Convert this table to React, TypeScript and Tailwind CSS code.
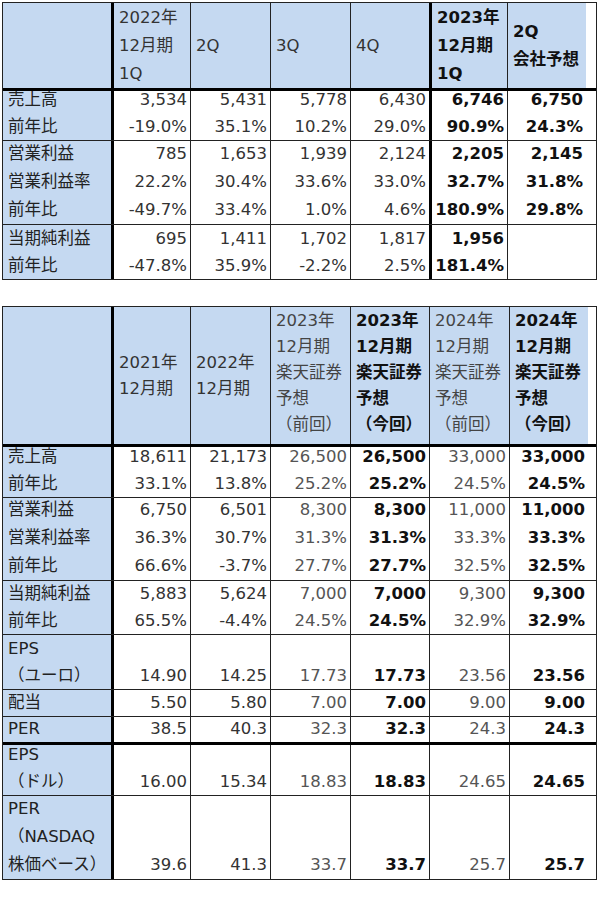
import React from "react";

type C = { l: string[]; b?: boolean; c?: string; v?: "top" | "mid" | "bot" };

const F = "font-['DejaVu_Sans','Noto_Sans_CJK_JP',sans-serif]";
const THIN = "border-l border-l-[#222]";
const THICK = "border-l-[3px] border-l-black";

const W1 = ["w-[108px]", "w-[79px]", "w-[80px]", "w-[80px]", "w-[79px]", "w-[78px]", "w-[79px]"];
const B1 = ["", THICK, THIN, THIN, THIN, THICK, THIN];
const W2 = ["w-[108px]", "w-[79px]", "w-[80px]", "w-[80px]", "w-[79px]", "w-[80px]", "w-[79px]"];
const B2 = ["", THICK, THIN, THIN, THIN, THIN, THIN];

type RowDef = {
  h: string;
  lead: string;
  top: "none" | "thin" | "thick";
  header?: boolean;
  cells: C[];
};

function Row({ r, W, B }: { r: RowDef; W: string[]; B: string[] }) {
  const topCls =
    r.top === "thick"
      ? "border-t-[3px] border-t-black"
      : r.top === "thin"
      ? "border-t border-t-[#222]"
      : "";
  return (
    <div className={`flex ${r.h} ${topCls}`}>
      {r.cells.map((cell, i) => {
        const isLabel = i === 0;
        const bg = isLabel || r.header ? "bg-[#c5d9f1]" : "bg-white";
        const v = cell.v ?? (r.header ? "mid" : "bot");
        const just = v === "top" ? "justify-start pt-[1px]" : v === "mid" ? "justify-center" : "justify-end";
        const align = isLabel || r.header ? "items-start pl-[5px]" : "items-end pr-[3px]";
        const weight = cell.b ? "font-bold" : "font-normal";
        const color = cell.c ?? (cell.b ? "text-[#111]" : "text-[#333]");
        return (
          <div
            key={i}
            className={`${W[i]} ${B[i]} ${bg} shrink-0 flex flex-col ${just} ${align} ${r.lead} ${weight} ${color} overflow-hidden whitespace-nowrap`}
          >
            {cell.l.map((t, j) => (
              <div key={j}>{t}</div>
            ))}
          </div>
        );
      })}
    </div>
  );
}

const G = "text-[#555]";

const t1: RowDef[] = [
  {
    h: "h-[85px]",
    lead: "leading-[28px]",
    top: "none",
    header: true,
    cells: [
      { l: [] },
      { l: ["2022年", "12月期", "1Q"] },
      { l: ["2Q"] },
      { l: ["3Q"] },
      { l: ["4Q"] },
      { l: ["2023年", "12月期", "1Q"], b: true },
      { l: ["2Q", "会社予想"], b: true },
    ],
  },
  {
    h: "h-[52px]",
    lead: "leading-[27px]",
    top: "thick",
    cells: [
      { l: ["売上高", "前年比"], c: "text-[#222]" },
      { l: ["3,534", "-19.0%"] },
      { l: ["5,431", "35.1%"] },
      { l: ["5,778", "10.2%"] },
      { l: ["6,430", "29.0%"] },
      { l: ["6,746", "90.9%"], b: true },
      { l: ["6,750", "24.3%"], b: true },
    ],
  },
  {
    h: "h-[84px]",
    lead: "leading-[28px]",
    top: "thin",
    cells: [
      { l: ["営業利益", "営業利益率", "前年比"], c: "text-[#222]" },
      { l: ["785", "22.2%", "-49.7%"] },
      { l: ["1,653", "30.4%", "33.4%"] },
      { l: ["1,939", "33.6%", "1.0%"] },
      { l: ["2,124", "33.0%", "4.6%"] },
      { l: ["2,205", "32.7%", "180.9%"], b: true },
      { l: ["2,145", "31.8%", "29.8%"], b: true },
    ],
  },
  {
    h: "h-[55px]",
    lead: "leading-[27px]",
    top: "thin",
    cells: [
      { l: ["当期純利益", "前年比"], c: "text-[#222]" },
      { l: ["695", "-47.8%"] },
      { l: ["1,411", "35.9%"] },
      { l: ["1,702", "-2.2%"] },
      { l: ["1,817", "2.5%"] },
      { l: ["1,956", "181.4%"], b: true },
      { l: [] },
    ],
  },
];

function six(a: string[], b: string[], c: string[], d: string[]): C[] {
  return [
    { l: a },
    { l: b },
    { l: c, c: G },
    { l: c, b: true },
    { l: d, c: G },
    { l: d, b: true },
  ];
}

const t2: RowDef[] = [
  {
    h: "h-[137px]",
    lead: "leading-[26px]",
    top: "none",
    header: true,
    cells: [
      { l: [] },
      { l: ["2021年", "12月期"], v: "mid" },
      { l: ["2022年", "12月期"], v: "mid" },
      { l: ["2023年", "12月期", "楽天証券", "予想", "（前回）"], v: "top", c: "text-[#444]" },
      { l: ["2023年", "12月期", "楽天証券", "予想", "（今回）"], v: "top", b: true },
      { l: ["2024年", "12月期", "楽天証券", "予想", "（前回）"], v: "top", c: "text-[#444]" },
      { l: ["2024年", "12月期", "楽天証券", "予想", "（今回）"], v: "top", b: true },
    ],
  },
  {
    h: "h-[53px]",
    lead: "leading-[27px]",
    top: "thick",
    cells: [
      { l: ["売上高", "前年比"], c: "text-[#222]" },
      ...six(["18,611", "33.1%"], ["21,173", "13.8%"], ["26,500", "25.2%"], ["33,000", "24.5%"]),
    ],
  },
  {
    h: "h-[83px]",
    lead: "leading-[28px]",
    top: "thin",
    cells: [
      { l: ["営業利益", "営業利益率", "前年比"], c: "text-[#222]" },
      ...six(
        ["6,750", "36.3%", "66.6%"],
        ["6,501", "30.7%", "-3.7%"],
        ["8,300", "31.3%", "27.7%"],
        ["11,000", "33.3%", "32.5%"]
      ),
    ],
  },
  {
    h: "h-[54px]",
    lead: "leading-[27px]",
    top: "thin",
    cells: [
      { l: ["当期純利益", "前年比"], c: "text-[#222]" },
      ...six(["5,883", "65.5%"], ["5,624", "-4.4%"], ["7,000", "24.5%"], ["9,300", "32.9%"]),
    ],
  },
  {
    h: "h-[55px]",
    lead: "leading-[27px]",
    top: "thin",
    cells: [
      { l: ["EPS", "（ユーロ）"], c: "text-[#222]" },
      ...six(["14.90"], ["14.25"], ["17.73"], ["23.56"]),
    ],
  },
  {
    h: "h-[27px]",
    lead: "leading-[27px]",
    top: "thin",
    cells: [{ l: ["配当"], c: "text-[#222]" }, ...six(["5.50"], ["5.80"], ["7.00"], ["9.00"])],
  },
  {
    h: "h-[26px]",
    lead: "leading-[26px]",
    top: "thin",
    cells: [{ l: ["PER"], c: "text-[#222]" }, ...six(["38.5"], ["40.3"], ["32.3"], ["24.3"])],
  },
  {
    h: "h-[53px]",
    lead: "leading-[27px]",
    top: "thick",
    cells: [
      { l: ["EPS", "（ドル）"], c: "text-[#222]" },
      ...six(["16.00"], ["15.34"], ["18.83"], ["24.65"]),
    ],
  },
  {
    h: "h-[84px]",
    lead: "leading-[28px]",
    top: "thin",
    cells: [
      { l: ["PER", "（NASDAQ", "株価ベース）"], c: "text-[#222]" },
      ...six(["39.6"], ["41.3"], ["33.7"], ["25.7"]),
    ],
  },
];

export default function App() {
  return (
    <div className={`w-[600px] h-[898px] bg-white overflow-hidden pt-[2px] pl-[2px] text-[16.5px] ${F}`}>
      <div className="w-[595px] border border-[#222]">
        {t1.map((r, i) => (
          <Row key={i} r={r} W={W1} B={B1} />
        ))}
      </div>
      <div className="w-[595px] border border-[#222] mt-[26px]">
        {t2.map((r, i) => (
          <Row key={i} r={r} W={W2} B={B2} />
        ))}
      </div>
    </div>
  );
}
